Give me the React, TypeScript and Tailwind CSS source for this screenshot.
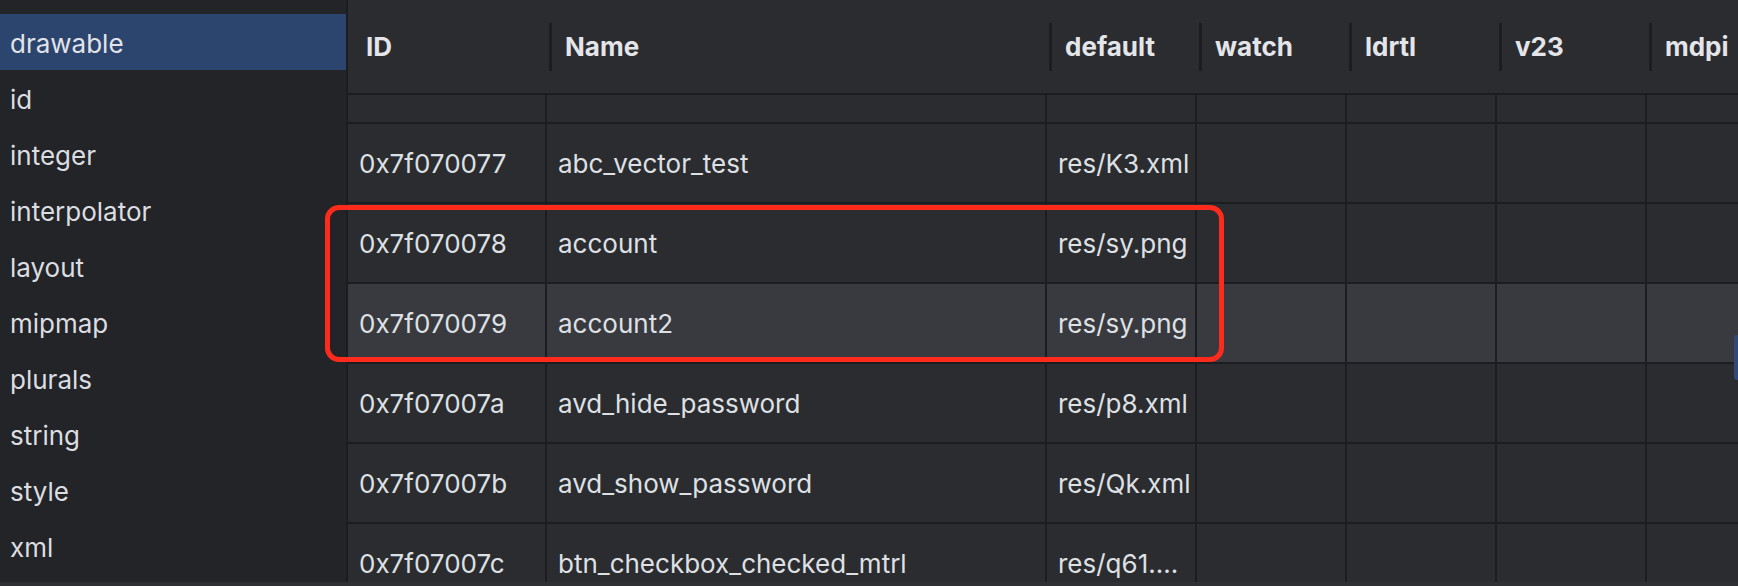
import React from "react";

const sidebarItems = [
  "drawable",
  "id",
  "integer",
  "interpolator",
  "layout",
  "mipmap",
  "plurals",
  "string",
  "style",
  "xml",
];

const headers = ["ID", "Name", "default", "watch", "ldrtl", "v23", "mdpi"];

const widths = [
  "w-[199px]",
  "w-[500px]",
  "w-[150px]",
  "w-[150px]",
  "w-[150px]",
  "w-[150px]",
  "flex-1",
];

type Row = {
  id: string;
  name: string;
  file: string;
  active?: boolean;
};

const rows: Row[] = [
  { id: "0x7f070077", name: "abc_vector_test", file: "res/K3.xml" },
  { id: "0x7f070078", name: "account", file: "res/sy.png" },
  { id: "0x7f070079", name: "account2", file: "res/sy.png", active: true },
  { id: "0x7f07007a", name: "avd_hide_password", file: "res/p8.xml" },
  { id: "0x7f07007b", name: "avd_show_password", file: "res/Qk.xml" },
  { id: "0x7f07007c", name: "btn_checkbox_checked_mtrl", file: "res/q61...." },
];

function Sidebar() {
  return (
    <aside className="w-[348px] shrink-0 border-r-2 border-[#1c1d20] bg-[#232428] pt-[14px]">
      {sidebarItems.map((item, i) => (
        <div
          key={item}
          className={
            i === 0
              ? "flex h-[56px] items-center bg-[#2b456f] pl-[10px] pt-[3px] text-[26px] text-[#e2e3e7]"
              : "flex h-[56px] items-center pl-[10px] pt-[3px] text-[26px] text-[#dcdde1]"
          }
        >
          {item}
        </div>
      ))}
    </aside>
  );
}

function HeaderRow() {
  return (
    <div className="flex h-[95px] shrink-0 border-b-2 border-[#1c1d20] bg-[#2b2c30]">
      {headers.map((label, i) => (
        <div
          key={label}
          className={`${widths[i]} flex items-center overflow-hidden`}
        >
          {i === 0 ? (
            <span className="pl-[18px] text-[26px] font-bold text-[#e4e5e9]">
              {label}
            </span>
          ) : (
            <>
              <div className="ml-[2px] h-[48px] w-[3px] shrink-0 bg-[#1c1d20]" />
              <span className="pl-[13px] text-[26px] font-bold text-[#e4e5e9]">
                {label}
              </span>
            </>
          )}
        </div>
      ))}
    </div>
  );
}

// the row scrolled up under the header: only its lower edge shows
function PartialRow() {
  return (
    <div className="flex h-[29px] border-b-2 border-[#1c1d20]">
      {widths.map((w, i) => (
        <div
          key={i}
          className={
            i === widths.length - 1
              ? w
              : `${w} border-r-2 border-[#1c1d20]`
          }
        />
      ))}
    </div>
  );
}

function BodyRow({ row }: { row: Row }) {
  const cells = [row.id, row.name, row.file, "", "", "", ""];

  return (
    <div
      className={
        row.active
          ? "flex h-[80px] border-b-2 border-[#1c1d20] bg-[#393a3f]"
          : "flex h-[80px] border-b-2 border-[#1c1d20] bg-[#2b2c30]"
      }
    >
      {cells.map((text, i) => (
        <div
          key={i}
          className={
            i === cells.length - 1
              ? `${widths[i]} flex items-center pl-[11px]`
              : `${widths[i]} flex items-center overflow-hidden whitespace-nowrap border-r-2 border-[#1c1d20] pl-[11px]`
          }
        >
          <span className="text-[26px] text-[#dfe0e4]">{text}</span>
        </div>
      ))}
    </div>
  );
}

export default function App() {
  return (
    <div className="relative h-[586px] w-[1738px] overflow-hidden bg-[#2f3034] font-['Inter','Noto_Sans',sans-serif]">
      <div className="flex h-[582px]">
        <Sidebar />

        <main className="flex min-w-0 flex-1 flex-col bg-[#2b2c30]">
          <HeaderRow />

          <div className="flex-1 overflow-hidden">
            <PartialRow />
            {rows.map((row) => (
              <BodyRow key={row.id} row={row} />
            ))}
          </div>
        </main>
      </div>

      {/* highlight around the two account rows */}
      <div className="absolute left-[325px] top-[205px] h-[157px] w-[899px] rounded-[14px] border-[5px] border-[#fd2b1c]" />

      {/* scroll thumb peeking at the right edge */}
      <div className="absolute right-0 top-[335px] h-[45px] w-[4px] rounded-l-[3px] bg-[#2d4a78]" />
    </div>
  );
}
